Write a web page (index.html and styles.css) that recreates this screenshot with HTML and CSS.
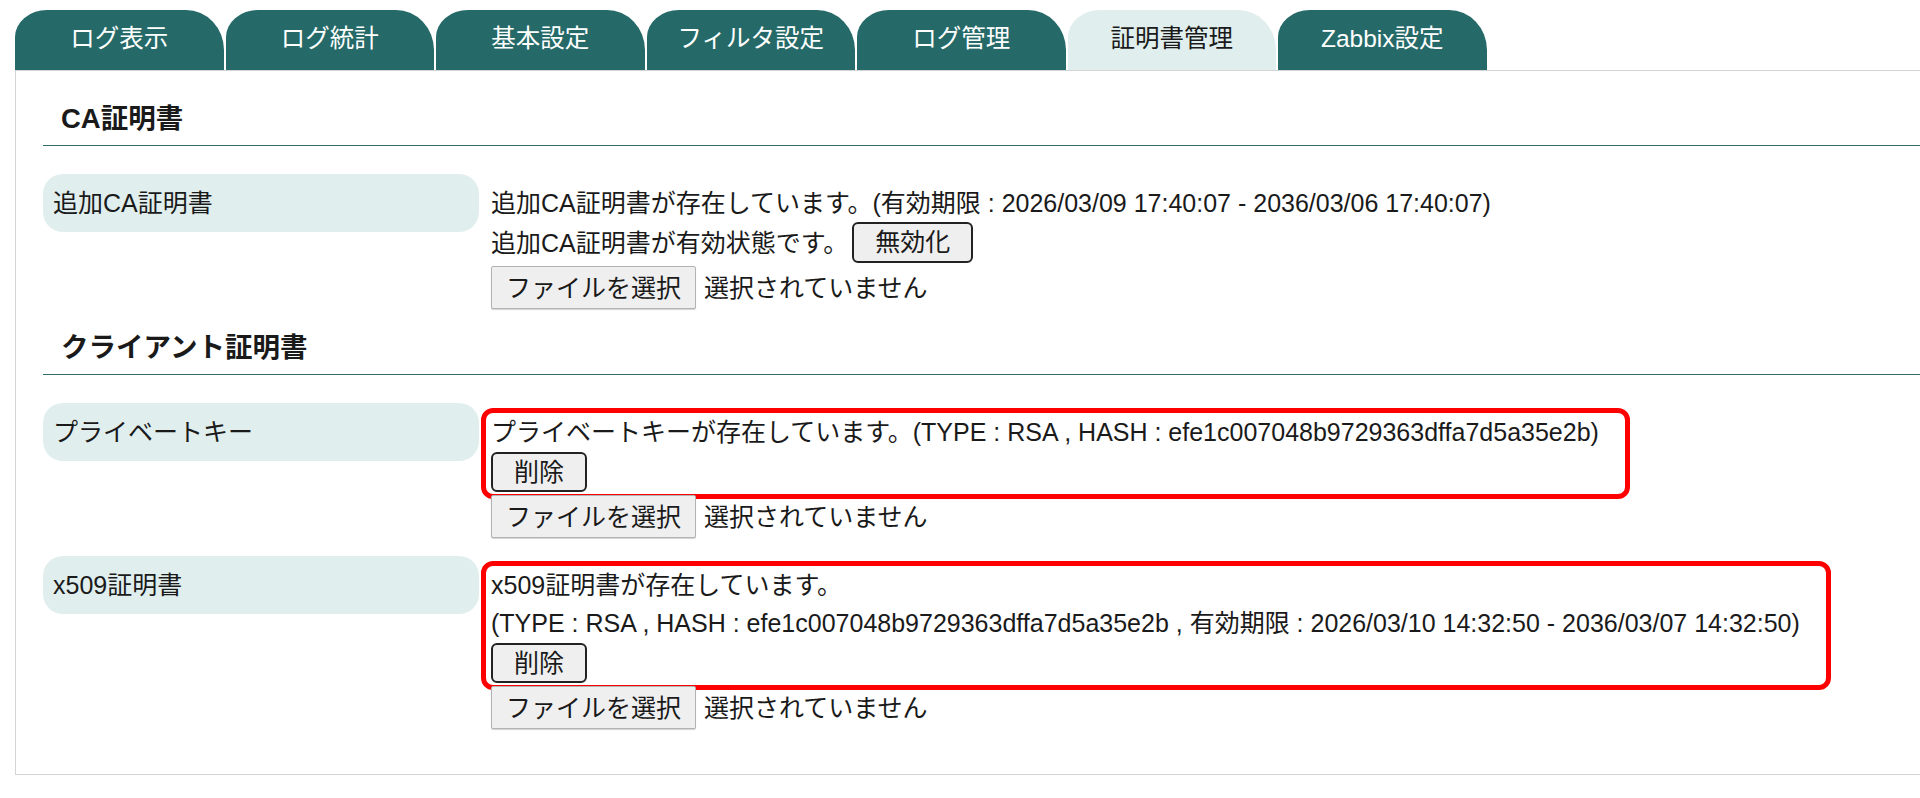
FILE: index.html
```html
<!DOCTYPE html>
<html lang="ja">
<head>
    <meta charset="UTF-8">
    <meta name="viewport" content="width=device-width, initial-scale=1.0">
    <title>証明書管理</title>
    <link rel="stylesheet" href="styles.css">
</head>
<body>
    <div class="tabs">
        <div class="tab">ログ表示</div>
        <div class="tab">ログ統計</div>
        <div class="tab">基本設定</div>
        <div class="tab">フィルタ設定</div>
        <div class="tab">ログ管理</div>
        <div class="tab active">証明書管理</div>
        <div class="tab">Zabbix設定</div>
    </div>

    <div class="panel">
        <section class="cert-section">
            <h2 class="section-title">CA証明書</h2>
            <div class="rows">
                <div class="label">追加CA証明書</div>
                <div class="value">
                    <div class="line">追加CA証明書が存在しています。(有効期限 : 2026/03/09 17:40:07 - 2036/03/06 17:40:07)</div>
                    <div class="line line-btn">追加CA証明書が有効状態です。<button class="btn">無効化</button></div>
                    <div class="file-row">
                        <span class="file-btn">ファイルを選択</span>
                        <span class="file-name">選択されていません</span>
                    </div>
                </div>
            </div>
        </section>

        <section class="cert-section">
            <h2 class="section-title">クライアント証明書</h2>
            <div class="rows">
                <div class="label">プライベートキー</div>
                <div class="value">
                    <div class="highlight">
                        <div class="line">プライベートキーが存在しています。(TYPE : RSA , HASH : efe1c007048b9729363dffa7d5a35e2b)</div>
                        <div class="btn-row"><button class="btn">削除</button></div>
                    </div>
                    <div class="file-row">
                        <span class="file-btn">ファイルを選択</span>
                        <span class="file-name">選択されていません</span>
                    </div>
                </div>

                <div class="label">x509証明書</div>
                <div class="value">
                    <div class="highlight">
                        <div class="line">x509証明書が存在しています。</div>
                        <div class="line">(TYPE : RSA , HASH : efe1c007048b9729363dffa7d5a35e2b , 有効期限 : 2026/03/10 14:32:50 - 2036/03/07 14:32:50)</div>
                        <div class="btn-row"><button class="btn">削除</button></div>
                    </div>
                    <div class="file-row">
                        <span class="file-btn">ファイルを選択</span>
                        <span class="file-name">選択されていません</span>
                    </div>
                </div>
            </div>
        </section>
    </div>
</body>
</html>
```

FILE: styles.css
```css
body {
    margin: 0;
    padding: 10px 0 0 15px;
    background: #fff;
    color: #1a1a1a;
    font-family: "Liberation Sans", Arial, "Noto Sans CJK JP", sans-serif;
    font-size: 25px;
    line-height: 38px;
    overflow: hidden;
}
.tabs {
    display: flex;
    gap: 2px;
    height: 60px;
}
.tab {
    width: 208.5px;
    height: 60px;
    background: #256a68;
    color: #fff;
    font-size: 24.5px;
    line-height: 58px;
    text-align: center;
    border-radius: 32px 38px 0 0 / 27px 40px 0 0;
}
.tab.active {
    background: #e0eeed;
    color: #1a1a1a;
}
.panel {
    border: 1px solid #d4d4d4;
    border-right: none;
    padding: 19px 0 35px 27px;
}
.section-title {
    margin: 10px 0 0;
    padding: 0 0 7px 18px;
    font-size: 27.5px;
    line-height: 38px;
    font-weight: bold;
    border-bottom: 1px solid #2d6e6c;
}
.rows {
    display: grid;
    grid-template-columns: 436px 1fr;
    column-gap: 12px;
    row-gap: 8px;
    margin-top: 28px;
}
.label {
    align-self: start;
    background: #e0eeed;
    border-radius: 20px;
    padding: 10px 10px;
    line-height: 38px;
}
.value {
    padding: 10px 0;
}
.line {
    white-space: nowrap;
}
.line-btn {
    display: flex;
    align-items: center;
    gap: 4px;
    height: 41px;
}
.btn {
    font: inherit;
    color: #1a1a1a;
    line-height: 33px;
    padding: 2px 21px;
    background: #efefef;
    border: 2px solid #222;
    border-radius: 6px;
}
.btn-row {
    padding-top: 1px;
    height: 40px;
}
.btn-row .btn {
    display: block;
    height: 40px;
    padding: 1px 21px;
}
.highlight {
    width: fit-content;
    margin: -5px -20px -7px -10px;
    padding: 0 26px 2px 5px;
    border: 5px solid #f00;
    border-radius: 12px;
}
.file-row {
    display: flex;
    align-items: center;
    margin-top: 3px;
}
.file-btn {
    display: inline-block;
    padding: 2px 14px 1px;
    line-height: 38px;
    background: #efefef;
    border: 1px solid #b3b3b3;
    border-radius: 2px;
    box-shadow: 0 1px 1px rgba(0,0,0,0.18);
}
.file-name {
    margin-left: 8px;
}
```
